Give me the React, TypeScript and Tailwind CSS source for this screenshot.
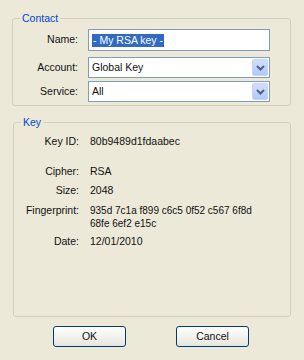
import React from 'react';

const Chevron: React.FC = () => (
    <svg width="9" height="6" viewBox="0 0 9 6" className="block">
        <path d="M1 1 L4.5 4.5 L8 1" fill="none" stroke="#4D6185" strokeWidth="2" />
    </svg>
);

const Select: React.FC<{ value: string; className?: string }> = ({ value, className }) => (
    <div className={`flex items-center h-[21px] w-[182px] bg-white border border-[#7F9DB9] ${className ?? ''}`}>
        <span className="flex-1 pl-[3px] leading-[13px]">{value}</span>
        <div className="mr-[1px] flex h-[17px] w-[16px] items-center justify-center rounded-[2px] border border-[#C3D3FD] bg-gradient-to-b from-[#D2DFFC] to-[#B1C8F5]">
            <Chevron />
        </div>
    </div>
);

const Row: React.FC<{ label: string; children: React.ReactNode; className?: string }> = ({ label, children, className }) => (
    <div className={`flex ${className ?? ''}`}>
        <div className="w-[65px] text-right leading-[13px]">{label}</div>
        <div className="ml-[11px] leading-[13px]">{children}</div>
    </div>
);

const App: React.FC = () => {
    return (
        <div
            className="w-[304px] h-[360px] bg-[#ECE9D8] text-[#111] text-[10.5px] pt-[11px]"
            style={{ fontFamily: '"Liberation Sans", Arial, sans-serif' }}
        >
            <fieldset className="ml-[12px] w-[279px] h-[95px] border border-[#D0D0BF] rounded-[3px] px-0">
                <legend className="ml-[7px] px-[2px] leading-[14px] text-[#0046D5]">Contact</legend>

                <div className="mt-[4px] flex items-center">
                    <div className="w-[65px] text-right">Name:</div>
                    <div className="ml-[10px] flex h-[22px] w-[182px] items-center bg-white border border-[#7F9DB9] pl-[3px]">
                        <span className="bg-[#316AC5] text-white px-[1px] leading-[13px]">- My RSA key -</span>
                    </div>
                </div>

                <div className="mt-[6px] flex items-center">
                    <div className="w-[65px] text-right">Account:</div>
                    <Select value="Global Key" className="ml-[10px]" />
                </div>

                <div className="mt-[3px] flex items-center">
                    <div className="w-[65px] text-right">Service:</div>
                    <Select value="All" className="ml-[10px]" />
                </div>
            </fieldset>

            <fieldset className="mt-[9px] ml-[13px] w-[278px] h-[202px] border border-[#D0D0BF] rounded-[3px] px-0">
                <legend className="ml-[7px] px-[2px] leading-[14px] text-[#0046D5]">Key</legend>

                <Row label="Key ID:" className="mt-[6px]">80b9489d1fdaabec</Row>
                <Row label="Cipher:" className="mt-[17px]">RSA</Row>
                <Row label="Size:" className="mt-[6px]">2048</Row>
                <Row label="Fingerprint:" className="mt-[7px]">
                    <div className="text-[10px]">935d 7c1a f899 c6c5 0f52 c567 6f8d</div>
                    <div className="text-[10px]">68fe 6ef2 e15c</div>
                </Row>
                <Row label="Date:" className="mt-[5px]">12/01/2010</Row>
            </fieldset>

            <div className="mt-[9px] flex">
                <button className="ml-[53px] h-[21px] w-[73px] rounded-[3px] border border-[#003C74] bg-gradient-to-b from-white to-[#E6E5DE] leading-[13px]">
                    OK
                </button>
                <button className="ml-[50px] h-[21px] w-[73px] rounded-[3px] border border-[#003C74] bg-gradient-to-b from-white to-[#E6E5DE] leading-[13px]">
                    Cancel
                </button>
            </div>
        </div>
    );
};

export default App;
